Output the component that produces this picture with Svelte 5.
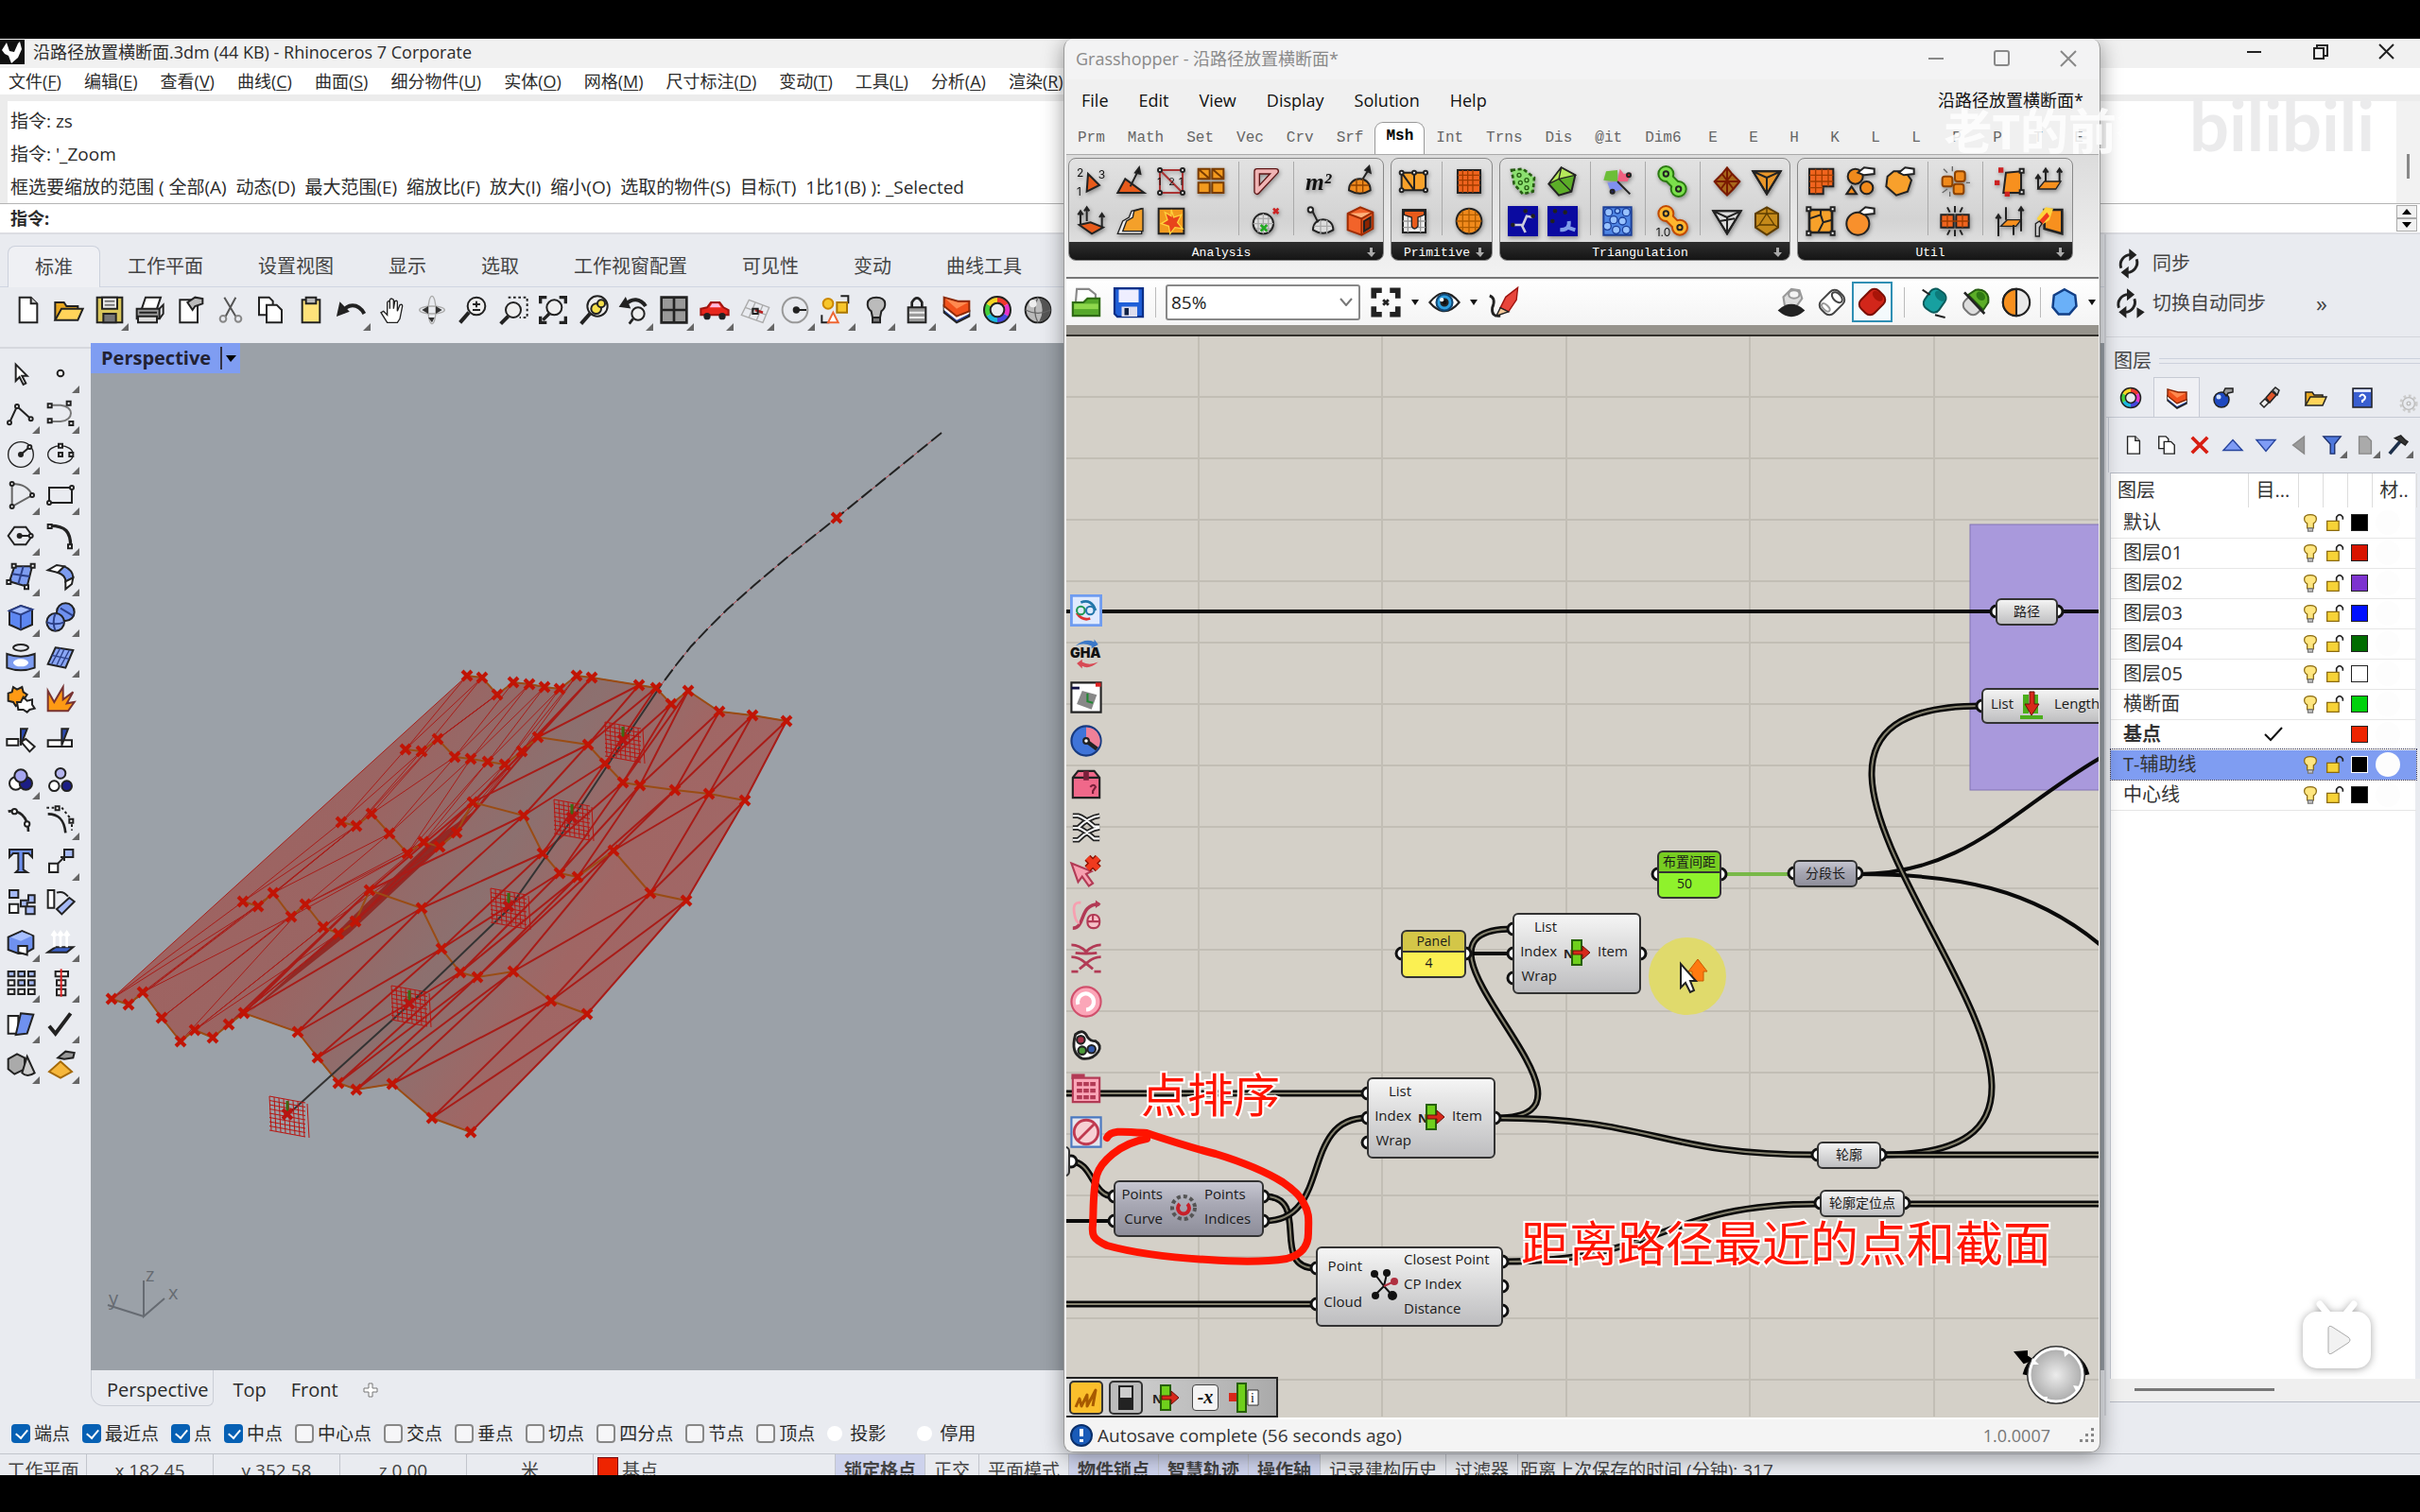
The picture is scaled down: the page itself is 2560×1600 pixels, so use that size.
<script lang="ts">
  type Point = [number, number];

  const menus = [
    ['文件', 'F'], ['编辑', 'E'], ['查看', 'V'], ['曲线', 'C'], ['曲面', 'S'], ['细分物件', 'U'], ['实体', 'O'],
    ['网格', 'M'], ['尺寸标注', 'D'], ['变动', 'T'], ['工具', 'L'], ['分析', 'A'], ['渲染', 'R']
  ];
  const rhinoTabs = ['标准', '工作平面', '设置视图', '显示', '选取', '工作视窗配置', '可见性', '变动', '曲线工具'];

  // All icons use a 24 x 24 box
  const icons: Record<string, string> = {
    doc: '<path fill="#fff" d="M5 2h9l5 5v15H5z"/><path fill="#ccc" d="M14 2v5h5"/>',
    open: '<path fill="#e9a820" d="M1 20V6h7l2 3h9v3"/><path fill="#ffd45a" d="M1 20 6 11h17l-4 9z"/>',
    save: '<path fill="#d8c55a" d="M2 2h20v20H2z"/><path fill="#eee" d="M6 2h12v9H6z"/><path fill="#777" d="M7 15h10v7H7z"/><path stroke="#777" d="M8 5h8M8 8h8"/>',
    print: '<path fill="#fff" d="M6 11 9 2h12l-3 9"/><path fill="#999" d="M2 11h18v8H2z"/><path fill="#ddd" d="M3 17h15v5H3z"/><path d="m20 11 3-3v7l-3 4M4 14h14"/>',
    props: '<path fill="#fff" d="M4 4h14v18H4z"/><path fill="#bbb" d="m10 6 6-4 6 1v4l-6 2-2 3z"/>',
    cut: '<path stroke="#555" d="M7 2l9 15M16 2 8 17"/><circle cx="6" cy="19" r="2.500" stroke="#888"/><circle cx="18" cy="19" r="2.500" stroke="#888"/>',
    copy: '<path fill="#fff" d="M3 2h8l3 3v11H3z"/><path fill="#fff" d="M9 8h8l4 4v10H9z"/>',
    paste: '<path fill="#ffe27a" d="M5 4h14v18H5z"/><path fill="#bbb" d="M8 2h8v5H8z"/>',
    undo: '<path stroke-width="3" d="M5 14c3-7 12-8 17 1"/><path fill="#222" d="m1 16 2-9 6 6z"/>',
    hand: '<path fill="#fff" stroke-width="1" d="M8 22 3 14l2-1 3 3V6q1-2 2 0v5-7q1-2 3 0v7l1-6q2-1 2 1v7l2-5q2-1 2 1l-2 10-2 3z"/>',
    orbit: '<ellipse cx="12" cy="12" rx="10" ry="3" stroke="#aaa" stroke-width="1"/><ellipse cx="12" cy="12" rx="3" ry="11" stroke="#aaa" stroke-width="1"/><path fill="#333" stroke="none" d="m4 12 5-3v6zm16 0-5-3v6zM12 22l-3-4h5z"/>',
    zoom: '<circle cx="15" cy="9" r="7" fill="#eee"/><path stroke-width="3" d="m9 14-7 8"/><path d="M15 5v5M12 7.500h6M12 12h6"/>',
    zoomwin: '<path stroke-dasharray="2 2" d="M8 2h15v16h-6"/><circle cx="12" cy="12" r="6" fill="#eee"/><path stroke-width="3" d="m8 17-6 6"/>',
    zoomext: '<path stroke-width="2.500" d="M2 7V2h5M17 2h5v5M22 17v5h-5M7 22H2v-5"/><circle cx="13" cy="10" r="6" fill="#eee"/><path stroke-width="2.500" d="m9 15-5 5"/>',
    zoomsel: '<circle cx="15" cy="9" r="8" fill="#eee"/><circle cx="14" cy="11" r="4" fill="#f6e04c"/><circle cx="18" cy="7" r="3" fill="#f6e04c"/><path stroke-width="3" d="m9 15-7 8"/>',
    zoomprev: '<path stroke-width="3" d="M5 8c5-6 12-5 16 1"/><path fill="#222" d="m1 9 4-6 3 7z"/><circle cx="15" cy="15" r="5" fill="#eee"/><path stroke-width="2" d="m11 19-3 4"/>',
    views: '<path fill="#999" stroke-width="2" d="M2 2h20v20H2zM12 2v20M2 12h20"/>',
    car: '<path fill="#e8261c" stroke="#a01510" d="M1 11l5-1 3-4h7l3 4 4 2v4H1z"/><path fill="#fbd" stroke="none" d="m8 10 2-3h5l2 3z"/><circle cx="6" cy="17" r="2" fill="#222"/><circle cx="18" cy="17" r="2" fill="#222"/>',
    cplane: '<path stroke="#aaa" stroke-width="1" d="m7 4 16 6-5 12L1 16zM4 10l17 6M12 6 7 18M18 8l-5 12"/><path stroke="#b22" stroke-width="2" d="m12 12 6 2"/><path d="M10 11h4v4h-4z"/>',
    turn: '<circle cx="12" cy="12" r="10" stroke="#999"/><path d="M12 12h9"/><circle cx="13" cy="12" r="2" fill="#222"/>',
    group: '<path d="M16 1h6v6M1 16v6h6"/><circle cx="6" cy="7" r="4" fill="#f7c62b" stroke="#c80"/><path fill="#f7c62b" stroke="#a70" d="M13 6h8v8h-8z"/><path fill="#fff" stroke="#e63" d="m10 14 4 8H6z"/>',
    bulb: '<path fill="#bbb" d="M12 2c9 0 8 8 4 11l-1 5H9l-1-5C4 10 3 2 12 2z"/><path fill="#777" d="M9 18h6v4H9z"/>',
    lock: '<path stroke-width="2" d="M8 10V6q4-7 8 0v4"/><path fill="#999" d="M5 10h14v12H5z"/><path stroke="#eee" d="M6 14h12M6 18h12"/>',
    layer: '<path fill="#26439c" d="m2 9 10 8 10-4v4l-10 5-10-8z"/><path fill="#fff" stroke="none" d="m2 9 10 8 10-4v2l-10 5-10-8z"/><path fill="#f1521c" stroke="#8c2a08" d="m2 2 11 3 9 0v8l-10 4L2 9z"/><path fill="#ff8a50" stroke="none" d="m3 3 10 3h8l-9 5z"/>',
    wheel: '<g stroke-width="5"><path stroke="#f03a2e" d="M12 4a8 8 0 0 1 7 4"/><path stroke="#e832c8" d="M19 8a8 8 0 0 1 0 8"/><path stroke="#4647e0" d="M19 16a8 8 0 0 1-7 4"/><path stroke="#1bb8e0" d="M12 20a8 8 0 0 1-7-4"/><path stroke="#43cf3c" d="M5 16a8 8 0 0 1 0-8"/><path stroke="#f5d422" d="M5 8a8 8 0 0 1 7-4"/></g><circle cx="12" cy="12" r="10.500"/><circle cx="12" cy="12" r="5.500"/>',
    sphere: '<circle cx="12" cy="12" r="10" fill="#bbb"/><path fill="#555" stroke="none" d="M13 3a9 9 0 0 1 0 18q5-9 0-18z"/><path stroke="#666" stroke-width="1" d="M2 12q10 5 20 0M12 2q-5 10 0 20"/><circle cx="8" cy="7" r="3" fill="#eee" stroke="none"/>',

    arrow: '<path fill="#fff" d="M8 5v13l3-3 3 6 2-1-3-6h4z"/>',
    point: '<circle cx="12" cy="12" r="2.500" fill="#fff"/>',
    pline: '<path d="M3 19 9 6l11 10"/><g fill="#fff"><circle cx="3" cy="19" r="1.500"/><circle cx="9" cy="6" r="1.500"/><circle cx="20" cy="16" r="1.500"/></g>',
    curve: '<path stroke="#777" d="M4 5h8c11 1 11 12 0 13H4"/><path fill="#fff" d="M2 4h3v3H2zM17 2h3v3h-3zM2 16h3v3H2zM19 18h3v3h-3z"/>',
    circle: '<circle cx="12" cy="12" r="10" stroke-width="1"/><path d="m12 12 7-6"/><circle cx="12" cy="12" r="1.500" fill="#222"/><circle cx="19" cy="6" r="1.500" fill="#fff"/>',
    ellipse: '<ellipse cx="12" cy="12" rx="10" ry="7" stroke-width="1"/><path fill="#fff" d="M10.500 3.500h3v3h-3zM10.500 10.500h3v3h-3zM19 10.500h3v3h-3z"/>',
    arc: '<path d="M5 21V3c9 0 14 4 16 9z" stroke="#666"/><g fill="#fff"><circle cx="5" cy="3" r="1.500"/><circle cx="5" cy="21" r="1.500"/><circle cx="21" cy="12" r="1.500"/></g>',
    rect: '<path d="M3 6h18v12H3z"/><circle cx="3" cy="18" r="1.500" fill="#fff"/><circle cx="21" cy="6" r="1.500" fill="#fff"/>',
    polygon: '<path d="M7 5h9l5 7-5 7H7l-5-7z"/><path d="M11 12h9"/><circle cx="11" cy="12" r="1.500" fill="#222"/><circle cx="20" cy="12" r="1.500" fill="#fff"/>',
    fillet: '<path stroke-width="2.500" d="M4 4c12 0 16 5 16 16"/><path fill="#fff" d="M2 3h3v3H2zM18 19h3v3h-3z"/>',
    srf: '<path fill="#7d9cf0" d="M7 4h14l-4 16-14-4z"/><path stroke="#2b3f86" d="m5 10 14 2M14 4l-4 14"/><path fill="#fff" d="M5 2h3v3H5zM20 2h3v3h-3zM1 15h3v3H1zM15 19h3v3h-3z"/>',
    bend: '<path fill="#fff" d="m2 7 7-4 6 1-5 5z"/><path fill="#7d9cf0" d="M15 4q7 3 7 9l-6 3q0-5-6-7z"/><path fill="#fff" d="m22 13-1 5-5 4v-6z"/>',
    box: '<path fill="#5d87f2" d="M3 7 12 3l9 3v12l-9 4-9-4z"/><path fill="#a8c0ff" stroke="#2b3f86" d="m3 7 9 3 9-4-9-3z"/><path stroke="#2b3f86" d="M12 10v12"/>',
    boole: '<circle cx="16" cy="8" r="7" fill="#6f91ef"/><circle cx="8" cy="16" r="7" fill="#86a4f5"/><path stroke="#2b3f86" d="M1 16q7 3 14 0M8 9q-3 7 0 14M12 5l10 6"/>',
    tube: '<ellipse cx="12" cy="4" rx="6" ry="2.500"/><path fill="#7d9cf0" d="M1 9q11 4 22 0v11q-11 4-22 0z"/><ellipse cx="12" cy="16" rx="6" ry="3" fill="#fff" stroke="none"/>',
    mesh: '<path fill="#8aa6f5" d="m8 4 14 2-6 14-14-3z"/><path stroke="#2b3f86" stroke-width="1" d="m5 10 14 3M15 5 9 18M12 4 5 17M19 6l-7 13"/>',
    gear: '<path fill="#ff9a14" d="M2 8l3-1 1-4 3 2 4-2 1 4 3 2-2 3 1 3-5 1-3 2-2-3-4-1z"/><path fill="#fff" d="m9 15 3 0 2-4 3 3 4-1 0 4 2 3-4 1-2 2-3-2-4 0z"/>',
    burst: '<path fill="#ff9a14" stroke="#733" d="M2 22V6l5 9 7-12v10l8-6-5 9 6-1-5 7z"/>',
    split: '<path fill="#fff" d="M1 12h9v5H1z"/><path fill="#fff" d="m12 14 4-2 7 6-4 4z"/><path fill="#2b4ab0" d="M12 4h5l-5 13z"/>',
    trim: '<path fill="#fff" d="M2 13h19v5H2z"/><path fill="#2b4ab0" d="M13 4h5l-5 13z"/>',
    union: '<circle cx="8" cy="15" r="5" fill="#fff"/><circle cx="16" cy="15" r="5" fill="#1c1e86"/><circle cx="12" cy="9" r="5" fill="#a5a5ef"/>',
    dots: '<circle cx="12" cy="7" r="4" fill="#b5b5ef"/><circle cx="7" cy="17" r="4" fill="#fff"/><circle cx="17" cy="17" r="4" fill="#1c1e86"/>',
    match: '<path stroke-width="2" d="M2 5c8-2 16 4 16 16"/><g fill="#fff"><circle cx="7" cy="5" r="2"/><circle cx="17" cy="15" r="2"/></g>',
    offset: '<path stroke-width="2" d="M2 7c9 0 13 5 14 15"/><path stroke-dasharray="2 2" d="M1 2h12l8 10v8"/><path fill="#fff" d="M8 1h3v3H8zM19 11h3v3h-3z"/>',
    text: '<path fill="#6f91ef" d="M3 3h18v6l-3-3h-4v13l3 2H8l2-2V6H6L3 9z"/>',
    move: '<path fill="#fff" d="M3 14h7v7H3z"/><path fill="#a5b9f5" d="M15 3h7v6h-7z"/><path d="m10 14 5-5M12 9h3v3"/>',
    blocks: '<path fill="#a5b9f5" d="M3 3h7v6H3zM12 11h6V7h5v6h-6v3h-5zM16 16h7v6h-7z"/><path fill="#fff" d="M3 14h7v7H3z"/>',
    rotate: '<path fill="#fff" d="M2 3h5v14H2z"/><path fill="#a5b9f5" d="m9 18 10-9 4 3-10 10z"/><path d="M9 5q5-2 9 3"/>',
    bool2: '<path fill="#6f91ef" d="m2 8 11-5 9 4v10l-7 4h-5l-8-3z"/><path fill="#a8c0ff" stroke="none" d="m4 8 9-4 8 3-9 4z"/><path fill="#fff" d="M10 15h7v7l-7-2z"/>',
    up: '<path fill="#3b5fc4" d="m2 20 6-4h14l-5 4z"/><path stroke="#fff" stroke-width="2" d="M7 16V4M12 16V4M17 16V4M5 7l2-3 2 3M10 7l2-3 2 3M15 7l2-3 2 3"/>',
    array: '<path fill="#a5b9f5" d="M2 3h5v4H2zM10 3h5v4h-5zM18 3h5v4h-5zM10 10h5v4h-5zM18 10h5v4h-5z"/><path fill="#fff" d="M2 10h5v4H2zM2 17h5v4H2zM10 17h5v4h-5zM18 17h5v4h-5z"/>',
    align: '<path fill="#fff" d="M8 3h10v4H8zM9 10h7v4H9zM9 17h7v5H9z"/><path stroke="#d22" d="M12.500 1v22"/>',
    boxes: '<path fill="#fff" d="M2 6h8v14H2z"/><path fill="#6f91ef" d="m12 4 10 1-5 15-9 1z"/>',
    check: '<path stroke-width="3" d="m3 14 5 6L20 4"/>',
    solids: '<path fill="#aaa" d="m2 8 7-4 6 3v9l-8 4-5-4z"/><path fill="#ccc" d="m17 6 6 13q-6 4-10 0z"/>',
    sand: '<path fill="#f6b73c" stroke="#a56a08" d="m12 10 9 8-9 5-9-5z"/><path fill="#999" d="m10 7 6-5 7 1-1 4-7 1z"/>',

    mIndex: '<path fill="#e85b1b" d="M9 6l9 9-10 5z"/><g fill="#111" stroke="none" font-size="9" font-family="Inter"><text x="0" y="8">2</text><text x="17" y="10">3</text><text x="0" y="23">1</text></g>',
    mNormal: '<path fill="#e85b1b" d="M7 10l15 11H1z"/><path d="m11 16 6-12"/><path fill="#111" d="m18 1 1 5-4-1z"/>',
    mFace: '<path stroke="#a33" d="M3 3h18v18H3zM3 3l18 18"/><g fill="#fff"><circle cx="3" cy="3" r="1.500"/><circle cx="21" cy="3" r="1.500"/><circle cx="3" cy="21" r="1.500"/><circle cx="21" cy="21" r="1.500"/></g><g fill="#111" stroke="none" font-size="8" font-family="Inter"><text x="1" y="15">1</text><text x="10" y="15">2</text><text x="18" y="15">1</text></g>',
    mQuad: '<path fill="#f29a1e" stroke="#7a3c00" d="M2 2h9v8H2zM13 2h9v8h-9zM2 13h9v8H2zM13 13h9v8h-9zM2 2l9 8M13 2l9 8"/>',
    mEdge: '<path stroke="#5c1414" stroke-width="5" stroke-linejoin="round" d="M5 4h15L5 20z"/><path stroke="#f0b4b4" stroke-width="3" stroke-linejoin="round" d="M5 4h15L5 20z"/>',
    mClose: '<circle cx="10" cy="14" r="8" fill="#ddd"/><path stroke="#aaa" stroke-width="1" d="M2 14h16M10 6v16M4 10h12M4 18h12M6 8v13M14 8v13"/><path stroke="#2a2" stroke-width="2" d="m8 15 5 5M13 15l-5 5"/><path stroke="#c22" stroke-width="2" d="m18 2 4 4M22 2l-4 4"/>',
    mArea: '<text x="0" y="19" fill="#111" stroke="none" font-size="19" font-weight="bold" font-style="italic" font-family="Liberation Serif">m²</text>',
    mDome: '<path fill="#f08a1c" d="M3 19c0-12 17-12 17 0q-8 5-17 0z"/><path stroke="#8c4200" stroke-width="1" d="M4 15h15M9 10v11M14 10v11"/><path d="m14 10 5-8"/><path fill="#111" d="m19 0 1 5-4-2z"/>',
    mVerts: '<path fill="#e85b1b" d="m2 15 9-2 10 4-9 5z"/><path d="M3 15V5M8 12V2M20 17V7M1 7l2-3 2 3M6 4l2-3 2 3M18 9l2-3 2 3"/>',
    mShadow: '<path fill="#eee" stroke-width="1" d="M1 22 5 12l5-3 2-5 8-2v20z"/><path fill="#f4a02a" stroke-width="1" d="M5 20 8 12l5-3 1-5 7-2v18z"/>',
    mStar: '<path fill="#f29a1e" d="M2 2h20v20H2z"/><path fill="#e8441b" stroke="#ffd23c" stroke-width="1" d="m12 3 2 6 6-2-3 6 4 5-6-1-4 5-1-6-6-2 5-3-2-6 5 3z"/>',
    mProbe: '<path fill="#ddd" d="M6 19c0-11 16-11 16 0q-8 5-16 0z"/><path stroke="#aaa" stroke-width="1" d="M7 16h14M12 11v11M17 11v11"/><path d="m5 3 5 10"/><circle cx="4" cy="3" r="2" fill="#fff"/>',
    mBox: '<path fill="#f2632a" stroke="#a02c00" d="M2 6 12 1l10 4v13l-9 5-11-4z"/><path fill="#ffb27c" stroke="#a02c00" d="M2 6l11 4 9-5M13 10v13"/><path fill="#8c2400" d="m15 12 5-3v8l-5 3z"/>',
    mSplit: '<path fill="#f7a12a" d="M2 5h19v14H2zM12 5v14M2 5l10 14"/><g fill="#fff"><circle cx="2" cy="5" r="1.500"/><circle cx="12" cy="5" r="1.500"/><circle cx="21" cy="5" r="1.500"/><circle cx="2" cy="19" r="1.500"/><circle cx="21" cy="19" r="1.500"/></g>',
    mPlane: '<path fill="#f0641e" d="M3 3h18v18H3z"/><path stroke="#a03c00" stroke-width="1" d="M3 7h18M3 11h18M3 15h18M7 3v18M11 3v18M15 3v18"/>',
    mDrip: '<path fill="#eee" d="M3 3h18v18H3z"/><path stroke="#999" stroke-width="1" d="M3 12h18M3 17h18M7 8v13M17 8v13"/><path fill="#e85b1b" stroke-width="1" d="M4 4h16v3l-5 2v7q-3 4-5 0V9L4 7z"/>',
    mSphere: '<circle cx="12" cy="12" r="10" fill="#f08a1c"/><path stroke="#b05c00" stroke-width="1" d="M2 12h20M12 2v20M4 7h16M4 17h16M7 4v16M17 4v16"/>',
    mPatch: '<path fill="#8ce070" d="m3 3 9-1 9 7-1 11-8 2-7-8z" stroke="#265c12" stroke-dasharray="3 2" stroke-width="2"/><g stroke="#265c12" stroke-width="1"><circle cx="9" cy="7" r="1.500"/><circle cx="15" cy="11" r="1.500"/><circle cx="10" cy="13" r="1.500"/><circle cx="15" cy="17" r="1.500"/></g>',
    mHull: '<path fill="#5cae28" d="M11 1 22 7l-3 13-10 3-8-9z"/><path fill="#b6e85a" stroke-width="1" d="m11 1-2 9-8 4zM11 1l11 6-13 3z"/><path stroke-width="1" d="m9 10 10 10"/>',
    mMetaball: '<path fill="#0a0aa0" stroke="none" d="M0 0h24v24H0z"/><path stroke="#ccd" stroke-width="2" d="M4 15h8l3-7 5 1M11 15l3 6"/><g fill="#000"><circle cx="14" cy="4" r="1"/><circle cx="20" cy="8" r="1"/><circle cx="4" cy="15" r="1"/></g>',
    mMeta2: '<path fill="#0a0aa0" stroke="none" d="M0 0h24v24H0z"/><path stroke="#7f9ce8" stroke-width="3" d="M10 19q8 0 7-7M16 17l6 2"/><g fill="#000"><circle cx="6" cy="4" r="1"/><circle cx="14" cy="5" r="1"/><circle cx="4" cy="12" r="1"/></g>',
    mVector: '<path fill="#6cbe38" stroke="none" d="M3 4l9-1v9L1 11z"/><path fill="#f06080" stroke="none" d="m12 12 2-10 3 4 6-1-3 7z"/><path fill="#8090f0" stroke="none" d="m12 12-8 1 3 8 9-3z"/><path d="m12 12 10 10"/><circle cx="21" cy="7" r="1.500" fill="#c22"/><circle cx="8" cy="20" r="1.500" fill="#226"/>',
    mVoronoi: '<path fill="#4f86e4" stroke="#1b3f9a" d="M1 1h22v22H1z"/><g stroke="#1b3f9a" stroke-width="1" fill="#98c2ff"><circle cx="5" cy="5" r="3"/><circle cx="12" cy="4" r="2"/><circle cx="19" cy="5" r="3"/><circle cx="9" cy="11" r="3"/><circle cx="16" cy="12" r="3"/><circle cx="4" cy="16" r="3"/><circle cx="11" cy="19" r="3"/><circle cx="19" cy="19" r="3"/></g>',
    mLinkG: '<g fill="#7be04c" stroke="#2a7a10"><path stroke-width="8" d="m8 8 9 9"/><circle cx="7" cy="6" r="6"/><circle cx="17" cy="18" r="6"/><path stroke="#7be04c" stroke-width="5" d="m8 8 9 9"/></g><circle cx="7" cy="6" r="2"/><circle cx="17" cy="18" r="2"/>',
    mLinkO: '<g fill="#ffb52e" stroke="#c24a00"><path stroke-width="8" d="m8 8 9 9"/><circle cx="7" cy="6" r="6"/><circle cx="18" cy="17" r="6"/><path stroke="#ffb52e" stroke-width="5" d="m8 8 9 9"/></g><circle cx="7" cy="6" r="2"/><circle cx="18" cy="17" r="2"/><text x="-1" y="24" fill="#111" stroke="none" font-size="9" font-family="Inter">1.0</text>',
    mOcta: '<path fill="#a8661a" stroke="#7a1a00" d="m12 1 4 5 6 6-5 6-5 5-5-5-5-6 6-6z"/><path stroke="#7a1a00" d="m8 6 9 12M16 6 7 18M2 12h20M12 1v22"/>',
    mTetra: '<path fill="#e8962a" d="M1 4h22L12 22z"/><path d="M1 4h22L12 22zM12 22V9L1 4M12 9l11-5"/>',
    mTetraW: '<path fill="#ddd" d="M1 4h22L12 22z"/><path d="M1 4h22L12 22zM12 22V9L1 4M12 9l11-5M6 12l12-2"/>',
    mIco: '<path fill="#c58a1a" stroke="#5c3c00" d="m12 1 9 5v11l-9 6-9-6V6z"/><path stroke="#5c3c00" stroke-width="1" d="m12 6 6 9H6zM12 1v5M3 17l3-2M21 17l-3-2M3 6l9 0 9 0"/>',
    mJoin: '<path fill="#f0641e" d="M3 2h19v14h-8v6H3z"/><path stroke="#a03c00" stroke-width="1" d="M3 7h19M3 12h19M3 17h11M8 2v20M13 2v14M18 2v14"/>',
    mPick: '<circle cx="8" cy="8" r="6" fill="#f08a1c"/><path fill="#f08a1c" d="m5 16 4 6H1z"/><circle cx="17" cy="17" r="5" fill="#f08a1c"/><path fill="#fff" d="m10 5 5-4 8 1v4l-8 1z"/>',
    mSmooth: '<path fill="#f8a02c" d="m7 4 9 0 5 7-3 9-9 3-8-7 1-8z"/><path fill="#fff" d="m11 5 5-4 7 1v4l-8 1z"/>',
    mWeld: '<path fill="#f7a12a" stroke-width="2" d="M3 3h18v18H3z"/><path d="m3 10 9-3 2 6 7-2M14 13l-4 8M12 7V3"/><path fill="#fff" d="M1 1h3v3H1zM20 1h3v3h-3zM1 20h3v3H1zM20 20h3v3h-3z"/>',
    mBall: '<circle cx="10" cy="14" r="9" fill="#f8902c"/><path fill="#fff" d="m11 5 5-4 7 1v4l-8 1z"/>',
    mExplode: '<g fill="#f08a1c" stroke="#8c4200"><rect x="2" y="8" width="8" height="8" rx="2"/><rect x="12" y="4" width="8" height="8" rx="2"/><rect x="11" y="14" width="8" height="8" rx="2"/></g><path stroke="#666" stroke-width="1" d="M10 0v4M3 2l3 3M21 13h3M2 21l4-3M8 20v4"/>',
    mCull: '<path fill="#f0641e" d="M1 7h10v10H1zM13 7h10v10H13z"/><path stroke="#a03c00" stroke-width="1" d="M1 12h22M6 7v10M18 7v10"/><path d="M12 0v5M6 1l2 4M18 1l-2 4M12 19v5M6 23l2-4M18 23l-2-4"/>',
    mDeform: '<path fill="#f7901e" d="m9 5 12-1v17H7z"/><path fill="#c22" stroke="none" d="M3 1h4v4H3zM0 11h4v4H0zM8 20h4v4H8z"/><path fill="#fff" d="M20 2h3v3h-3zM20 19h3v3h-3z"/>',
    mLift: '<path fill="#f7901e" stroke-width="1" d="m3 18 5-6h13l-4 6z"/><path d="M3 18V8M9 12V2M20 12V2M1 10l2-3 2 3M7 5l2-3 2 3M18 5l2-3 2 3"/>',
    mFlip: '<path fill="#f7901e" stroke-width="1" d="m5 16 5-5h11l-4 5z"/><path d="M3 24V8M9 11V1M21 20V1M15 23v-8M1 10l2-3 2 3M19 4l2-3 2 3"/>',
    mFlame: '<path fill="#f7901e" stroke-width="2" d="M8 3h14v19l-14-4z"/><path fill="#ffd23c" stroke="none" d="M2 10 9 1l6 1-3 9-6 4z"/><path fill="#f03a1e" stroke="none" d="m2 14 8-9 2 3-6 7z"/><path fill="#ccc" stroke-width="1" d="M1 24V14l3-2 2 2-2 3v7z"/>',

    ghOpen: '<path fill="#fff" stroke="#888" d="M5 2h9l5 4v8H4z"/><path fill="#56a82a" stroke="#2f6a14" d="M2 22V12h8l3-3h9v13z"/><path fill="#8fd84c" stroke="none" d="M3 13h18v4H3z"/>',
    ghSave: '<path fill="#1f5fd8" stroke="#0a2f86" d="M2 2h20v20H4l-2-2z"/><path fill="#eef" stroke="none" d="M5 3h14v9H5z"/><path fill="#dde" stroke="none" d="M7 15h11v7H7z"/><path fill="#124" stroke="none" d="M9 16h3v5H9z"/>',
    ghFit: '<path stroke-width="4" d="M3 9V3h6M15 3h6v6M21 15v6h-6M9 21H3v-6"/><path stroke-width="2" d="m10 10 4 4M14 10l-4 4"/>',
    ghEye: '<path fill="#fff" d="M1 12q11-14 22 0-11 13-22 0z"/><circle cx="12" cy="12" r="6" fill="#2e9fe0" stroke="#124a78"/><circle cx="12" cy="12" r="2.500" fill="#111"/><circle cx="10" cy="10" r="1.500" fill="#fff" stroke="none"/>',
    ghPen: '<path fill="#e8463c" stroke="#a01510" stroke-width="1" d="m10 16 4-8 9-7-1 9-6 9z"/><path fill="#f3c89a" stroke-width="1" d="m10 16-3 6 9-3z"/><path stroke-width="2" d="M2 7q5 2 2 9-1 7 6 6"/>',
    vHide: '<path fill="#ddd" stroke="#999" d="m6 8 6-6 6 1 2 6-5 7-8-2z"/><ellipse cx="14" cy="6" rx="4" ry="3" stroke="#999" fill="#f4f4f4"/><path fill="#222" d="M3 18q9-8 18 0-9 8-18 0z"/>',
    vWire: '<rect x="2" y="5" width="20" height="14" rx="5" fill="#fff" stroke="#444" transform="rotate(-45 12 12)"/><ellipse cx="16" cy="8" rx="3" ry="5" stroke="#444" transform="rotate(-45 16 8)"/><ellipse cx="7" cy="16" rx="2" ry="4" stroke="#999" transform="rotate(-45 7 16)"/>',
    vShade: '<rect x="2" y="4" width="20" height="15" rx="5" fill="#d2261a" stroke="#7a0e04" transform="rotate(-45 12 12)"/><ellipse cx="16" cy="7" rx="3" ry="5" fill="#a81408" stroke="none" transform="rotate(-45 16 7)"/>',
    vSel: '<rect x="4" y="4" width="18" height="14" rx="5" fill="#17a0a0" stroke="#0b5a5a" transform="rotate(-55 12 12)"/><ellipse cx="16" cy="7" rx="3" ry="5" fill="#0c7a7a" stroke="none" transform="rotate(-45 16 7)"/><path d="m2 2 6 4M12 22l8 2"/>',
    vClip: '<rect x="2" y="5" width="20" height="14" rx="5" fill="#ddd" stroke="#777" transform="rotate(-45 12 12)"/><path fill="#5cae28" stroke="#265c12" d="m6 6 6-4q8-1 10 6v4l-4 6z"/><ellipse cx="16" cy="7" rx="3" ry="4" fill="#2f7a14" stroke="none" transform="rotate(-45 16 7)"/><path stroke-width="2" d="m3 4 16 17"/>',
    vHalf: '<circle cx="12" cy="12" r="10" fill="#e8e8e8"/><path fill="#f7901e" d="M12 2a10 10 0 0 0 0 20z"/>',
    vHex: '<path fill="#6ab0f8" stroke="#123f86" stroke-width="2" d="m12 1 9 5 1 9-6 7-9 0-5-6 1-10z"/>',

    sync: '<path stroke-width="2.500" d="M5 16A9 9 0 0 1 14 4M19 8a9 9 0 0 1-9 12"/><path fill="#222" d="m13 0 5 4-5 4zM11 16l-5 4 5 4z"/>',
    syncAuto: '<path stroke-width="2.500" d="M3 16A9 9 0 0 1 12 4M17 8a9 9 0 0 1-9 12"/><path fill="#222" d="m11 0 5 4-5 4zM9 16l-5 4 5 4zM20 17v7l5-4z"/>',
    bomb: '<circle cx="10" cy="14" r="8" fill="#1f49c0"/><circle cx="7" cy="11" r="2.500" fill="#cfe0ff" stroke="none"/><path fill="#999" d="m12 6 2-4h8v4l-5 1-2 3z"/>',
    tube2: '<path fill="#eee" d="m2 18 5-5 4 4-5 5z"/><path fill="#e0562a" d="m8 12 6-7 5 4-7 8z"/><path fill="#ccc" d="m15 4 3-3 4 3-2 5z"/>',
    help: '<path fill="#3a5fd0" d="M2 2h20v20H2z"/><path fill="#dfe6ff" stroke="none" d="M3 3h18v3H3z"/><path stroke="#fff" stroke-width="2" d="M9 11q3-5 6 0 0 3-3 4v2"/>',
    cog: '<circle cx="12" cy="12" r="9" stroke="#ccc" stroke-width="3" stroke-dasharray="3 3"/><circle cx="12" cy="12" r="7" stroke="#bbb"/><circle cx="12" cy="12" r="2" stroke="#bbb"/>',
    del: '<path stroke="#d81e12" stroke-width="4" d="m3 3 18 18M21 3 3 21"/>',
    tri: '<path fill="#7f9cf5" stroke="#26439c" d="M12 6 23 18H1z"/>',
    triDown: '<path fill="#7f9cf5" stroke="#26439c" d="M1 6h22L12 19z"/>',
    triLeft: '<path fill="#999" stroke="#888" d="M18 2v20L5 12z"/>',
    filter: '<path fill="#4f78dc" stroke="#1c2f6a" d="M2 2h20l-7 9v11h-5V11z"/>',
    docGrey: '<path fill="#aaa" stroke="#888" d="M5 2h9l5 5v15H5z"/>',
    hammer: '<path stroke="#1c2f4a" stroke-width="4" d="M2 22 14 8"/><path fill="#333" d="m8 4 7-3 5 5 3 2-3 4-7-5z"/>',
    lamp: '<path fill="#ffe680" stroke="#8a6a10" d="M12 2c11 0 8 9 4 11v6H8v-6C4 11 1 2 12 2z"/><path fill="#ccc" stroke="#777" d="M9 19h6v4H9z"/>',
    unlock: '<path stroke-width="2" d="M14 10V5q4-6 8 0v3"/><path fill="#f7d337" stroke="#8a6a10" d="M2 10h15v12H2z"/>'
  };

  const standardTools = ['doc', 'open', 'save', 'print', 'props', 'cut', 'copy', 'paste', 'undo', 'hand', 'orbit', 'zoom', 'zoomwin', 'zoomext', 'zoomsel', 'zoomprev', 'views', 'car', 'cplane', 'turn', 'group', 'bulb', 'lock', 'layer', 'wheel', 'sphere'];
  const standardFlyouts = ['save', 'undo', 'zoomprev', 'views', 'car', 'cplane', 'turn', 'group', 'bulb', 'lock', 'layer', 'wheel'];
  const sideTools = ['arrow', 'point', 'pline', 'curve', 'circle', 'ellipse', 'arc', 'rect', 'polygon', 'fillet', 'srf', 'bend', 'box', 'boole', 'tube', 'mesh', 'gear', 'burst', 'split', 'trim', 'union', 'dots', 'match', 'offset', 'text', 'move', 'blocks', 'rotate', 'bool2', 'up', 'array', 'align', 'boxes', 'check', 'solids', 'sand'];
  const sidePlain = ['arrow', 'gear', 'burst', 'split', 'trim', 'dots', 'match', 'text', 'blocks', 'rotate'];

  const snaps = [
    { label: '端点', on: true }, { label: '最近点', on: true }, { label: '点', on: true }, { label: '中点', on: true },
    { label: '中心点', on: false }, { label: '交点', on: false }, { label: '垂点', on: false }, { label: '切点', on: false },
    { label: '四分点', on: false }, { label: '节点', on: false }, { label: '顶点', on: false }
  ];

  const status = [
    { text: '锁定格点', on: true }, { text: '正交', on: false }, { text: '平面模式', on: false }, { text: '物件锁点', on: true },
    { text: '智慧轨迹', on: true }, { text: '操作轴', on: true }, { text: '记录建构历史', on: false }, { text: '过滤器', on: false }
  ];

  const layers = [
    { name: '默认', color: '#000000' },
    { name: '图层01', color: '#d81400' },
    { name: '图层02', color: '#7d33cf' },
    { name: '图层03', color: '#0010ff' },
    { name: '图层04', color: '#006c00' },
    { name: '图层05', color: '#ffffff' },
    { name: '横断面', color: '#00d20c' },
    { name: '基点', color: '#ee2400', current: true },
    { name: 'T-辅助线', color: '#000000', selected: true },
    { name: '中心线', color: '#000000' }
  ];

  const panelTabs = ['wheel', 'layer', 'bomb', 'tube2', 'open', 'help'];
  const layerTools = ['doc', 'copy', 'del', 'tri', 'triDown', 'triLeft', 'filter', 'docGrey', 'hammer'];
  const layerFlyouts = ['filter', 'docGrey', 'hammer'];

  // Grasshopper
  const ghMenus = ['File', 'Edit', 'View', 'Display', 'Solution', 'Help'];
  const ghTabs = ['Prm', 'Math', 'Set', 'Vec', 'Crv', 'Srf', 'Msh', 'Int', 'Trns', 'Dis', '@it', 'Dim6', 'E', 'E', 'H', 'K', 'L', 'L', 'P', 'P', 'T', 'E'];
  const ribbon = [
    { name: 'Analysis', blocks: [['mIndex', 'mNormal', 'mFace', 'mQuad', 'mVerts', 'mShadow', 'mStar'], ['mEdge', 'mClose'], ['mArea', 'mDome', 'mProbe', 'mBox']], cols: [4, 1, 2] },
    { name: 'Primitive', blocks: [['mSplit', 'mDrip'], ['mPlane', 'mSphere']], cols: [1, 1] },
    { name: 'Triangulation', blocks: [['mPatch', 'mHull', 'mMetaball', 'mMeta2'], ['mVector', 'mVoronoi'], ['mLinkG', 'mLinkO'], ['mOcta', 'mTetra', 'mTetraW', 'mIco']], cols: [2, 1, 1, 2] },
    { name: 'Util', blocks: [['mJoin', 'mPick', 'mSmooth', 'mWeld', 'mBall'], ['mExplode', 'mCull'], ['mDeform', 'mLift', 'mFlip', 'mFlame']], cols: [3, 1, 2] }
  ];

  const widgets = [
    '<path fill="#dfeaff" stroke="#6f9cf0" stroke-width="2" d="M1 1h22v22H1z"/><path stroke="#d33" stroke-width="2" d="M5 14q4 6 10 4"/><path stroke="#27a" stroke-width="2" d="M8 6q8-3 11 6"/><circle cx="8" cy="12" r="3" stroke="#295"/><circle cx="15" cy="12" r="3" stroke="#27a"/>',
    '<path fill="#3b78c8" stroke="none" d="M4 6q7-6 14-3V1l3 4-5 3V6Q10 3 4 6z"/><path fill="#d84a55" stroke="none" d="M21 18q-7 6-12 3v2l-4-4 4-3v2q5 3 12 0z"/><text x="0" y="15" fill="#111" stroke="none" font-size="10" font-weight="900" font-family="Inter">GHA</text>',
    '<path fill="#fff" d="M1 1h22v22H1z"/><path fill="#d22" stroke="none" d="M19 1h4v3h-4z"/><path fill="#114" stroke="none" d="M1 4h6v2H1z"/><path fill="#888" stroke="none" d="m9 7 11 3-4 11-11-4z"/><path stroke="#283" d="m13 9 0 6 4 1"/>',
    '<circle cx="12" cy="12" r="11" fill="#3f74d8" stroke="#173a80"/><path fill="#f08098" stroke="none" d="M12 12V2a10 10 0 0 1 9 15z"/><path stroke-width="3" d="m12 12 8 6"/><circle cx="12" cy="12" r="2" fill="#fff"/>',
    '<path fill="#f0688a" d="m2 7 4-5h12l4 5v15H2zM2 7h20"/><path fill="#7a1f3a" stroke="none" d="M10 2h4v7h-4z"/><path stroke="#7a1f3a" d="M15 14q3-3 4 0l-2 3v2"/>',
    '<g stroke-width="4"><path d="M2 3h4q4 1 12 8h4M2 12h4q4 1 12 8h4M2 12h4q8-8 16-9M2 21h4q8-8 16-9"/></g><g stroke="#fff"><path d="M2 3h4q4 1 12 8h4M2 12h4q4 1 12 8h4M2 12h4q8-8 16-9M2 21h4q8-8 16-9"/></g>',
    '<path fill="#f7a0b0" stroke="#b23a55" d="M1 6 16 12l-4 2 5 7-3 2-5-7-3 4z"/><path stroke="#8c1200" stroke-width="6" d="m13 2 8 8M21 2l-8 8"/><path stroke="#f03a1e" stroke-width="4" d="m13 2 8 8M21 2l-8 8"/>',
    '<path stroke="#b23a55" stroke-width="2.500" d="M2 22c10 0 4-18 20-18"/><path fill="#b23a55" stroke="none" d="m19 1 4 3-4 3z"/><path stroke="#f7a0b0" stroke-width="2" d="M8 3Q2 2 3 10t4 8"/><rect x="13" y="12" width="9" height="10" rx="4" fill="#f7c0c8" stroke="#b23a55"/><path stroke="#b23a55" d="M13 17h9M17 12v5"/>',
    '<path stroke="#b23a55" stroke-width="2" d="M1 2q6 0 11 5Q17 2 23 2M4 8q8 1 16 0M1 11q6 0 11 5 5-5 11-5M7 20l5-4 5 4M1 22h5M18 22h5"/>',
    '<circle cx="12" cy="12" r="11" fill="#fba6b8" stroke="#d0506c"/><path stroke="#fff" stroke-width="3" d="M6 14a6 6 0 1 1 6 4"/>',
    '<path fill="#fff" stroke-width="2" d="M4 4q6-5 9 2 2 3 6 3 5 3 2 8-4 6-12 5-9-4-5-18z"/><circle cx="8" cy="8" r="3" fill="#a83048"/><circle cx="9" cy="16" r="3" fill="#4a9a38"/><circle cx="16" cy="15" r="3" fill="#3258a8"/>',
    '<path fill="#b23a55" stroke="none" d="M1 1h10v4H1z"/><path fill="#fba6b8" stroke="#b23a55" d="M2 4h20v18H2z"/><path fill="#b23a55" stroke="none" d="M5 7h4v3H5zM10 7h4v3h-4zM15 7h4v3h-4zM5 12h4v3H5zM10 12h4v3h-4zM15 12h4v3h-4zM5 17h4v3H5zM10 17h4v3h-4zM15 17h4v3h-4z"/>',
    '<path fill="#e6e6ee" stroke="#4a78c0" d="M1 1h22v22H1z"/><circle cx="12" cy="12" r="9" stroke="#c03a50" stroke-width="2" fill="#f7d0d4"/><path stroke="#c03a50" stroke-width="2" d="m6 18 12-12"/>'
  ];

  // Wires of the definition; double ones carry lists
  const wires = [
    { d: 'M1128 647H2112M2176 647H2222', list: false },
    { d: 'M1128 1292H1178', list: false },
    { d: 'M1552 1009H1600', list: false },
    { d: 'M1966 925C2080 925 2130 855 2222 802', list: false },
    { d: 'M1966 925C2070 925 2150 940 2222 1000', list: false },
    { d: 'M1128 1157H1446', list: true },
    { d: 'M1128 1380H1392', list: true },
    { d: 'M1133 1229C1156 1229 1155 1266 1178 1266', list: true },
    { d: 'M1338 1266C1388 1266 1342 1342 1392 1342', list: true },
    { d: 'M1338 1292C1410 1292 1374 1183 1446 1183', list: true },
    { d: 'M1583 1183C1728 1183 1455 983 1600 983', list: true },
    { d: 'M1583 1183C1750 1183 1754 1222 1921 1222', list: true },
    { d: 'M1991 1222C2345 1222 1742 747 2096 747', list: true },
    { d: 'M1991 1222H2222', list: true },
    { d: 'M2016 1274H2222', list: true },
    { d: 'M1591 1335C1758 1335 1757 1274 1924 1274', list: true }
  ];

  const components = [
    { x: 1601, y: 967, w: 134, h: 84, left: 46, right: 89, ins: [['List', 983], ['Index', 1009], ['Wrap', 1035]], outs: [['Item', 1009]] },
    { x: 1447, y: 1141, w: 134, h: 84, left: 46, right: 89, ins: [['List', 1157], ['Index', 1183], ['Wrap', 1209]], outs: [['Item', 1183]] },
    { x: 1393, y: 1320, w: 196, h: 83, left: 48, right: 92, ins: [['Point', 1342], ['Cloud', 1380]], outs: [['Closest Point', 1335], ['CP Index', 1361], ['Distance', 1387]] },
    { x: 1179, y: 1250, w: 157, h: 58, left: 51, right: 95, ins: [['Points', 1266], ['Curve', 1292]], outs: [['Points', 1266], ['Indices', 1292]], hidden: true },
    { x: 2097, y: 729, w: 150, h: 36, left: 33, right: 76, ins: [['List', 747]], outs: [['Length', 747]] }
  ];

  const relays = [
    { x: 2112, y: 634, w: 64, label: '路径' },
    { x: 1898, y: 911, w: 66, label: '分段长', hidden: true },
    { x: 1923, y: 1209, w: 66, label: '轮廓' },
    { x: 1926, y: 1260, w: 88, label: '轮廓定位点' }
  ];

  const panels = [
    { x: 1483, y: 985, w: 67, title: 'Panel', value: '4', head: '#d3c648', body: '#fbf052' },
    { x: 1754, y: 901, w: 66, title: '布置间距', value: '50', head: '#77cd22', body: '#8ff22c' }
  ];

  const gridX = [1268, 1462, 1657, 1851, 2046];
  const gridY = Array.from({ length: 17 }, (_, i) => 420 + i * 65);

  // Sampled cross sections of the terrain, back to front
  const sections: Point[][] = [
    [[687, 552], [714, 557], [743, 592], [772, 566], [801, 570], [829, 576], [858, 580], [889, 552], [917, 557], [1003, 573], [1034, 578], [1063, 613], [1094, 585], [1152, 629], [1213, 638], [1275, 649]],
    [[574, 709], [602, 714], [632, 687], [664, 725], [694, 730], [725, 736], [756, 741], [787, 714], [817, 684], [909, 700], [940, 740], [973, 779], [1005, 785], [1069, 795], [1133, 805], [1199, 818]],
    [[454, 865], [483, 873], [511, 846], [543, 889], [576, 931], [606, 907], [636, 916], [667, 887], [697, 822], [791, 850], [825, 930], [858, 973], [891, 980], [957, 925], [1024, 1016], [1091, 1031]],
    [[273, 1034], [301, 1044], [329, 1016], [363, 1066], [388, 1040], [421, 1088], [450, 1102], [481, 1076], [507, 1009], [603, 1047], [640, 1133], [674, 1183], [706, 1194], [772, 1182], [841, 1245], [908, 1272]],
    [[32, 1240], [62, 1253], [89, 1227], [123, 1281], [158, 1330], [185, 1307], [218, 1322], [247, 1295], [275, 1270], [374, 1311], [412, 1364], [449, 1419], [482, 1433], [549, 1421], [622, 1493], [694, 1523]]
  ];
  const frames: Point[] = [[974, 689], [880, 855], [763, 1044], [581, 1251], [356, 1485]];
  const track: Point[] = [[1561, 37], [1460, 130], [1367, 217], [1280, 298], [1215, 362], [1165, 413], [1130, 452], [1100, 490], [1072, 530], [1045, 570]];

  const toView = ([x, y]: Point): Point => [Math.round(4 + x * 0.574), Math.round(77 + y * 0.4975)];
  const path = (points: Point[]) => 'M' + points.map((p) => toView(p).join(' ')).join('L');

  const back = sections[0];
  const front = sections[4];
  const outline = path([...back, ...sections.slice(1, 4).map((s) => s[15]), ...[...front].reverse()]) + 'Z';

  // The left bank is seen at a flat angle, so its edges are drawn thinner
  let bankLines = '';
  let meshLines = '';
  for (let s = 0; s < 4; s++) {
    for (let i = 0; i < 16; i++) {
      let edges = path([sections[s][i], sections[s + 1][i]]);
      if (i > 0) edges += path([sections[s][i], sections[s + 1][i - 1]]);
      if (i < 8) bankLines += edges;
      else meshLines += edges;
    }
  }
  const marks = [...sections.flat(), [1367, 217] as Point].map(toView);
  const frameLines = Array.from({ length: 9 }, (_, i) => i);
</script>

{#snippet icon(name: string, size: number)}
  <svg class="icon" width={size} height={size} viewBox="0 0 24 24">{@html icons[name]}</svg>
{/snippet}

{#snippet wire(d: string, list: boolean)}
  <path class="wire" class:list {d} />
  {#if list}<path class="wire-core" {d} />{/if}
{/snippet}

{#snippet itemIcon(x: number, y: number)}
  <text class="letter" x={x - 14} y={y + 6}>N</text>
  <rect x={x - 5} y={y - 13} width="10" height="26" fill="#6fd01c" stroke="#276008" stroke-width="2" />
  <path d="M{x - 4} {y - 2}h10v-5l8 7-8 7v-5h-10z" fill="#d8281a" stroke="#6a1008" />
{/snippet}

<div class="screen">
  <div class="rhino">
    <header class="title">
      <svg width="26" height="26" viewBox="0 0 26 26"><path fill="#111" d="M0 0h26v26H0z" /><path fill="#fff" d="m2 11 5-8 3 9 5 1 4-9 2-2 2 8-4 9-7 6-3-8-4-2z" /></svg>
      <h1>沿路径放置横断面.3dm (44 KB) - Rhinoceros 7 Corporate</h1>
      <div class="controls">
        <button aria-label="最小化"><svg width="18" height="18"><path d="M1 9h15" /></svg></button>
        <button aria-label="还原"><svg width="18" height="18"><path d="M2 5h10v11H2zM5 5V2h11v11h-4" /></svg></button>
        <button aria-label="关闭"><svg width="18" height="18"><path d="m1 1 15 15M16 1 1 16" /></svg></button>
      </div>
    </header>

    <nav class="menu">
      {#each menus as [label, key]}
        <button>{label}(<u>{key}</u>)</button>
      {/each}
    </nav>

    <section class="command">
      <div class="history">
        <div class="lines">
          <p>指令: zs</p>
          <p>指令: '_Zoom</p>
          <p>框选要缩放的范围 ( 全部(A)&nbsp; 动态(D)&nbsp; 最大范围(E)&nbsp; 缩放比(F)&nbsp; 放大(I)&nbsp; 缩小(O)&nbsp; 选取的物件(S)&nbsp; 目标(T)&nbsp; 1比1(B) ): _Selected</p>
        </div>
        <div class="vscroll"><span></span></div>
      </div>
      <div class="prompt">
        <label for="prompt">指令:</label>
        <input id="prompt" type="text" />
        <div class="spin">
          <button aria-label="上一条"><svg width="12" height="8"><path d="M6 1l5 6H1z" /></svg></button>
          <button aria-label="下一条"><svg width="12" height="8"><path d="M6 7 1 1h10z" /></svg></button>
        </div>
      </div>
    </section>

    <div class="work">
      <main>
        <nav class="tabs">
          {#each rhinoTabs as tab, i}
            <button class:active={i === 0}>{tab}</button>
          {/each}
        </nav>
        <div class="toolbar">
          {#each standardTools as tool}
            <button class:flyout={standardFlyouts.includes(tool)} aria-label={tool}>{@render icon(tool, 32)}</button>
          {/each}
        </div>
        <div class="body">
          <aside class="side">
            {#each sideTools as tool}
              <button class:flyout={!sidePlain.includes(tool)} aria-label={tool}>{@render icon(tool, 32)}</button>
            {/each}
          </aside>
          <div class="views">
            <div class="viewport">
              <button class="view-name">Perspective <i></i><svg width="11" height="7"><path d="M0 0h11L5 7z" /></svg></button>
              <svg class="scene" width="100%" height="100%">
                <defs>
                  <linearGradient id="skin" x1="0" x2="1" y1="0.1" y2="0.5">
                    <stop offset="0" stop-color="#a4615f" />
                    <stop offset="0.42" stop-color="#9a6563" />
                    <stop offset="0.6" stop-color="#8c706f" />
                    <stop offset="0.76" stop-color="#a06664" />
                    <stop offset="1" stop-color="#a26767" />
                  </linearGradient>
                </defs>
                <path d={outline} fill="url(#skin)" stroke="#a8201a" stroke-width="1" />
                <path d={path([[620, 905], [700, 840], [660, 895], [470, 1100], [285, 1268], [440, 1105], [480, 1060]]) + 'Z'} fill="#8f1610" opacity="0.75" />
                <path d={bankLines} fill="none" stroke="#a81c18" stroke-width="1" />
                <path d={meshLines} fill="none" stroke="#a81c18" stroke-width="2" />
                {#each sections as section}
                  <path d={path(section)} fill="none" stroke="#9a4c14" stroke-width="2" />
                {/each}
                <path d={path(track)} fill="none" stroke="#b04048" stroke-width="1" />
                <path d={path(track)} fill="none" stroke="#222" stroke-width="2" stroke-dasharray="14 5" />
                <path d={path([[1045, 570], [974, 693], [880, 858], [763, 1049], [581, 1253], [356, 1488]])} fill="none" stroke="#333" stroke-width="2" />
                {#each frames.map(toView) as [x, y]}
                  <g transform="translate({x} {y})" stroke="#b81410" stroke-width="1" fill="none">
                    {#each frameLines as i}
                      <path d="M{-19 + i * 5} {-19 + i}l2 36M-19 {-19 + i * 4.5}l38 7" />
                    {/each}
                    <path d="M0 0v-14" stroke="#3c6a14" stroke-width="3" />
                    <path d="m-5-5 10 10M5-5-5 5" stroke-width="4" />
                  </g>
                {/each}
                {#each marks as [x, y]}
                  <path class="mark" d="M{x - 5} {y - 5}l10 10m0-10l-10 10" />
                {/each}
                <g class="axes">
                  <path d="M56 992v38l22-19M56 1030l-38-12" />
                  <text x="58" y="993">z</text><text x="82" y="1012">x</text><text x="19" y="1018">y</text>
                </g>
              </svg>
            </div>
            <nav class="view-tabs">
              <button class="active">Perspective</button>
              <button>Top</button>
              <button>Front</button>
              <button aria-label="新增"><svg width="16" height="16"><path d="M6 1h4v5h5v4h-5v5H6v-5H1V6h5z" fill="#fff" stroke="#777" /></svg></button>
            </nav>
          </div>
        </div>
      </main>

      <aside class="panel">
        <div class="sync">
          <button>{@render icon('sync', 28)}同步</button>
          <button>{@render icon('syncAuto', 28)}切换自动同步</button>
          <button class="more">»</button>
        </div>
        <h2><span>图层</span></h2>
        <nav class="panel-tabs">
          {#each panelTabs as tab, i}
            <button class:active={i === 1} aria-label={tab}>{@render icon(tab, 24)}</button>
          {/each}
          <button class="cog" aria-label="选项">{@render icon('cog', 22)}</button>
        </nav>
        <div class="layer-tools">
          {#each layerTools as tool}
            <button class:flyout={layerFlyouts.includes(tool)} aria-label={tool}>{@render icon(tool, 22)}</button>
          {/each}
        </div>
        <div class="layers">
          <table>
            <thead>
              <tr><th class="name">图层</th><th class="now">目...</th><th></th><th></th><th></th><th class="mat">材..</th></tr>
            </thead>
            <tbody>
              {#each layers as layer (layer.name)}
                <tr class:current={layer.current} class:selected={layer.selected}>
                  <td class="name">{layer.name}</td>
                  <td>{#if layer.current}<svg width="20" height="16"><path d="m1 8 6 6L19 1" fill="none" stroke="#111" stroke-width="2" /></svg>{/if}</td>
                  <td>{#if !layer.current}{@render icon('lamp', 20)}{/if}</td>
                  <td>{#if !layer.current}{@render icon('unlock', 20)}{/if}</td>
                  <td><span class="swatch" style="background: {layer.color}"></span></td>
                  <td><span class="material"></span></td>
                </tr>
              {/each}
            </tbody>
          </table>
        </div>
        <div class="hscroll"><span></span></div>
      </aside>
    </div>

    <div class="osnap">
      {#each snaps as snap}
        <label><input type="checkbox" checked={snap.on} />{snap.label}</label>
      {/each}
      <label class="round"><input type="checkbox" />投影</label>
      <label class="round"><input type="checkbox" />停用</label>
    </div>

    <footer class="status">
      <span class="plane">工作平面</span>
      <span class="coord">x 182.45</span>
      <span class="coord">y 352.58</span>
      <span class="coord">z 0.00</span>
      <span class="coord">米</span>
      <span class="active-layer"><i></i>基点</span>
      {#each status as item}
        <button class:on={item.on}>{item.text}</button>
      {/each}
      <span class="saved">距离上次保存的时间 (分钟): 317</span>
    </footer>

    <section class="gh">
      <header class="gh-title">
        <h2>Grasshopper - 沿路径放置横断面*</h2>
        <div class="controls">
          <button aria-label="Minimize"><svg width="18" height="18"><path d="M1 9h16" /></svg></button>
          <button aria-label="Maximize"><svg width="18" height="18"><rect x="1" y="1" width="15" height="15" rx="2" /></svg></button>
          <button aria-label="Close"><svg width="18" height="18"><path d="m1 1 16 16M17 1 1 17" /></svg></button>
        </div>
      </header>
      <nav class="gh-menu">
        {#each ghMenus as item}<button>{item}</button>{/each}
        <button class="file">沿路径放置横断面*</button>
      </nav>
      <nav class="gh-tabs">
        {#each ghTabs as tab}<button class:active={tab === 'Msh'}>{tab}</button>{/each}
      </nav>
      <div class="ribbon">
        {#each ribbon as group}
          <section>
            <div class="blocks">
              {#each group.blocks as block, b}
                <div class="block" style="grid-template-columns: repeat({group.cols[b]}, 42px)">
                  {#each block as tool}
                    <button aria-label={tool}>{@render icon(tool, 32)}</button>
                  {/each}
                </div>
              {/each}
            </div>
            <h3>{group.name}<svg width="11" height="12"><path d="M4 1h3v5h3l-4 5-5-5h3z" fill="#aaa" /></svg></h3>
          </section>
        {/each}
      </div>
      <div class="gh-bar">
        <button aria-label="Open">{@render icon('ghOpen', 34)}</button>
        <button aria-label="Save">{@render icon('ghSave', 36)}</button>
        <hr />
        <select aria-label="Zoom"><option>85%</option></select>
        <button aria-label="Zoom extents">{@render icon('ghFit', 34)}</button>
        <i class="caret"></i>
        <button aria-label="Named views">{@render icon('ghEye', 34)}</button>
        <i class="caret"></i>
        <button aria-label="Sketch">{@render icon('ghPen', 34)}</button>
        <span class="fill"></span>
        <button class="big" aria-label="No preview">{@render icon('vHide', 34)}</button>
        <button class="big" aria-label="Wireframe">{@render icon('vWire', 32)}</button>
        <button class="big on" aria-label="Shaded">{@render icon('vShade', 32)}</button>
        <hr />
        <button class="big" aria-label="Selected only">{@render icon('vSel', 32)}</button>
        <button class="big" aria-label="Document preview">{@render icon('vClip', 32)}</button>
        <button class="big" aria-label="Preview settings">{@render icon('vHalf', 34)}</button>
        <hr />
        <button aria-label="Mesh quality">{@render icon('vHex', 30)}</button>
        <i class="caret"></i>
      </div>

      <div class="canvas">
        <svg width="100%" height="100%">
          <defs>
            <linearGradient id="shell" x2="0" y2="1"><stop offset="0" stop-color="#f6f6f6" /><stop offset="0.3" stop-color="#e4e4e4" /><stop offset="1" stop-color="#bdbdbf" /></linearGradient>
            <linearGradient id="shell-off" x2="0" y2="1"><stop offset="0" stop-color="#c9c9d3" /><stop offset="0.4" stop-color="#a9a9b5" /><stop offset="1" stop-color="#8d8d99" /></linearGradient>
            <radialGradient id="dial"><stop offset="0" stop-color="#ececec" /><stop offset="1" stop-color="#a8a8a8" /></radialGradient>
          </defs>
          <g transform="translate(-1128 -344)">
            <rect x="1128" y="344" width="100%" height="11" fill="#96938c" />
            <path d="M1128 355H9000" stroke="#33312c" stroke-width="2" />
            <g stroke="#c2beb5" stroke-width="2">
              {#each gridX as x}<path d="M{x} 356V1499" />{/each}
              {#each gridY as y}<path d="M1128 {y}H9000" />{/each}
            </g>
            <rect x="2084" y="555" width="300" height="281" fill="#a999dc" stroke="#8274b4" />
            <path d="M1822 925H1896" stroke="#78b848" stroke-width="4" />
            {#each wires as w}{@render wire(w.d, w.list)}{/each}

            <g class="port"><circle cx="1133" cy="1229" r="6" /></g>
            <rect class="node" x="1100" y="1214" width="31" height="30" rx="4" />

            {#each components as c}
              <g class="port">
                {#each c.ins as [, y]}<circle cx={c.x} cy={y} r="6" />{/each}
                {#each c.outs as [, y]}<circle cx={c.x + c.w} cy={y} r="6" />{/each}
              </g>
              <rect class="node" class:hidden={c.hidden} x={c.x} y={c.y} width={c.w} height={c.h} rx="5" />
              {#each c.ins as [label, y]}<text class="label end" x={c.x + c.left} y={Number(y) + 3}>{label}</text>{/each}
              {#each c.outs as [label, y]}<text class="label" x={c.x + c.right} y={Number(y) + 3}>{label}</text>{/each}
            {/each}
            {@render itemIcon(1668, 1008)}
            {@render itemIcon(1514, 1182)}
            <g stroke="#111" stroke-width="2">
              <path d="m1464 1361-9-12m9 12 3-13m-3 13-9 9m9-9 9 10" />
              <path stroke="#b03040" d="m1464 1361 11-5" />
              <g stroke="none" fill="#111"><circle cx="1454" cy="1348" r="4" /><circle cx="1467" cy="1347" r="4" /><circle cx="1455" cy="1371" r="4" /><circle cx="1473" cy="1371" r="5" /><circle cx="1475" cy="1356" r="4" fill="#b03040" /></g>
            </g>
            <circle cx="1252" cy="1278" r="12" fill="none" stroke="#555" stroke-width="4" stroke-dasharray="4 3" />
            <path d="M1248 1274a6 6 0 1 0 8 0" fill="none" stroke="#c8202a" stroke-width="4" />
            <path d="M2140 735h6v20h-6zM2150 735h6v20h-6zM2137 757h24v4h-24z" fill="#4cae1c" /><path fill="#d8281a" stroke="#6a1008" d="M2147 732h5v13h5l-8 12-7-12h5z" />

            {#each relays as r}
              <g class="port"><circle cx={r.x} cy={r.y + 13} r="6" /><circle cx={r.x + r.w} cy={r.y + 13} r="6" /></g>
              <rect class="node" class:hidden={r.hidden} x={r.x} y={r.y} width={r.w} height="27" rx="5" />
              <text class="label small middle" x={r.x + r.w / 2} y={r.y + 18}>{r.label}</text>
            {/each}

            {#each panels as p}
              <g class="port"><circle cx={p.x} cy={p.y + 24} r="6" /><circle cx={p.x + p.w} cy={p.y + 24} r="6" /></g>
              <rect x={p.x} y={p.y} width={p.w} height="49" rx="5" fill={p.body} />
              <rect x={p.x} y={p.y} width={p.w} height="22" rx="4" fill={p.head} />
              <path d="M{p.x} {p.y + 22}h{p.w}" stroke="#333" stroke-width="2" />
              <rect x={p.x} y={p.y} width={p.w} height="49" rx="5" fill="none" stroke="#333" stroke-width="2" />
              <text class="label small middle" x={p.x + p.w / 2} y={p.y + 16}>{p.title}</text>
              <text class="label small middle" x={p.x + p.w / 2 - 5} y={p.y + 39}>{p.value}</text>
            {/each}

            <!-- pointer -->
            <circle cx="1785" cy="1033" r="41" fill="#e0da6c" />
            <path d="m1796 1015 10 13h-4v10h-12v-10h-4z" fill="#ff7a10" stroke="#c85a00" />
            <path d="M1778 1020v25l5-5 5 10 4-2-4-10h6z" fill="#fff" stroke="#222" stroke-width="2" />

            <!-- compass -->
            <path d="M2143 1455a33 33 0 0 1 64 0" fill="none" stroke="#000" stroke-width="7" />
            <path d="m2132 1431 12-1v5l6 4-9 3z" fill="#000" stroke="#000" stroke-width="2" />
            <circle cx="2175" cy="1455" r="30" fill="url(#dial)" stroke="#333" stroke-width="2" />
            <circle cx="2175" cy="1455" r="28" fill="none" stroke="#fff" stroke-width="3" />
            <path d="m2148 1444 2-7 7 7zM2183 1427l8 3-7 6zM2193 1466l7 1-3 7zM2159 1478l7 0-1 6z" fill="#fff" />

            <!-- freehand notes -->
            <path class="pen" d="M1171 1204C1175 1196 1185 1197 1213 1199C1240 1208 1262 1215 1286 1221C1312 1229 1336 1238 1357 1251C1370 1260 1376 1266 1379 1273C1386 1285 1384 1292 1384 1305C1384 1323 1372 1329 1361 1332C1335 1336 1305 1335 1278 1333C1240 1331 1200 1326 1171 1318C1155 1311 1155 1306 1156 1296C1157 1275 1156 1262 1160 1244C1164 1230 1184 1210 1213 1205" />
            <text class="note" x="1207" y="1177">点排序</text>
            <text class="note wide" x="1609" y="1335">距离路径最近的点和截面</text>
          </g>
        </svg>
        <div class="widgets">
          {#each widgets as widget}
            <svg class="icon" width="34" height="34" viewBox="0 0 24 24">{@html widget}</svg>
          {/each}
        </div>
        <div class="recent">
          <button class="hot" aria-label="Scribble"><svg width="28" height="28"><path d="m3 24 4-9 2 8 6-12 0 12 9-17-3 17" fill="none" stroke="#a85a00" stroke-width="3" stroke-linejoin="round" /></svg></button>
          <button class="toggle" aria-label="Toggle"><svg width="20" height="28"><path fill="#222" d="M2 1h16v26H2z" /><path fill="#ccc" d="M4 3h12v11H4z" /></svg></button>
          <button aria-label="List item"><svg width="36" height="34"><g transform="translate(18 17)">{@render itemIcon(0, 0)}</g></svg></button>
          <button class="neg">-x</button>
          <button aria-label="List length"><svg width="36" height="34"><path fill="#d8281a" d="M1 12h9v9H1z" /><path fill="#6fd01c" stroke="#276008" stroke-width="2" d="M10 2h9v30h-9z" /><path fill="#fff" stroke="#333" d="M21 9h11v16H21z" /><text x="24" y="22" font-size="14" font-family="Liberation Serif" fill="#111">i</text></svg></button>
        </div>
      </div>

      <footer class="gh-status">
        <svg width="24" height="24"><circle cx="12" cy="12" r="11" fill="#1a5bb8" stroke="#0a2f6a" stroke-width="2" /><path d="M12 5v8M12 16v3" stroke="#fff" stroke-width="4" /></svg>
        <span>Autosave complete (56 seconds ago)</span>
        <span class="version">1.0.0007</span>
        <svg width="16" height="16" fill="#888"><path d="M12 0h3v3h-3zM6 6h3v3H6zM12 6h3v3h-3zM0 12h3v3H0zM6 12h3v3H6zM12 12h3v3h-3z" /></svg>
      </footer>
    </section>

    <div class="watermark"><span>老T的前行</span><strong>bilibili</strong></div>
    <button class="tv" aria-label="播放">
      <svg width="80" height="80" viewBox="0 0 80 80"><path d="m22 6 9 11M58 6l-9 11" stroke="#fff" stroke-width="7" stroke-linecap="round" /><rect x="4" y="14" width="72" height="60" rx="15" fill="#fff" /><path d="M31 32q0-4 4-2l17 11q4 3 0 6L35 58q-4 2-4-2z" fill="#f2f2f2" stroke="#aaa" stroke-width="1" /></svg>
    </button>
  </div>
</div>

<style>
  :global(body) {
    margin: 0;
    background: #000;
  }

  .screen {
    box-sizing: border-box;
    min-height: 100vh;
    padding: 41px 0 39px;
    background: #000;
    display: flex;
    font-family: 'Open Sans', 'Noto Sans CJK SC', sans-serif;
    font-size: 18px;
    line-height: 28px;
    color: #2b2b2b;
  }

  .screen :global(*) {
    box-sizing: border-box;
  }

  button {
    border: 0;
    padding: 0;
    background: none;
    font: inherit;
    color: inherit;
    display: flex;
    align-items: center;
    justify-content: center;
    flex: none;
    white-space: nowrap;
  }

  h1,
  h2,
  h3,
  p {
    margin: 0;
    font-size: inherit;
    font-weight: normal;
  }

  .icon {
    display: block;
    fill: none;
    stroke: #222;
    stroke-width: 1.5px;
    overflow: visible;
  }

  .rhino {
    flex: 1;
    min-width: 0;
    position: relative;
    overflow: hidden;
    display: flex;
    flex-direction: column;
    background: #e9ebf0;
  }

  /* title and menu */
  .title {
    height: 31px;
    padding-bottom: 4px;
    display: flex;
    align-items: center;
    gap: 9px;
    background: #f1f1f1;
  }

  .title svg {
    flex: none;
  }

  .controls {
    margin-left: auto;
    display: flex;
  }

  .controls button {
    width: 70px;
  }

  .controls svg {
    fill: none;
    stroke: #222;
    stroke-width: 2px;
  }

  .menu {
    height: 28px;
    padding-left: 9px;
    display: flex;
    gap: 24px;
    background: #fff;
  }

  .menu u {
    text-underline-offset: 2px;
  }

  /* command area */
  .command {
    border-top: 7px solid #ececec;
    background: #fff;
  }

  .history {
    height: 109px;
    display: flex;
    border-bottom: 1px solid #b4b4b4;
  }

  .lines {
    flex: 1;
    padding: 4px 0 0 3px;
    border-left: 8px solid #ececec;
    font-size: 19px;
    line-height: 35px;
    white-space: nowrap;
  }

  .vscroll {
    width: 25px;
    background: #f2f2f2;
    padding: 56px 11px 0;
  }

  .vscroll span {
    display: block;
    width: 3px;
    height: 26px;
    background: #888;
  }

  .prompt {
    height: 32px;
    padding-left: 11px;
    display: flex;
    align-items: center;
    font-weight: bold;
    border-bottom: 2px solid #dcdde2;
  }

  .prompt input {
    flex: 1;
    border: 0;
    outline: 0;
    font: inherit;
  }

  .spin {
    width: 23px;
    margin-right: 2px;
  }

  .spin button {
    width: 22px;
    height: 14px;
    background: #f2f2f2;
    border: 1px solid #aaa;
  }

  .work {
    flex: 1;
    display: flex;
    min-height: 0;
  }

  main {
    flex: 1;
    min-width: 0;
    display: flex;
    flex-direction: column;
  }

  .tabs {
    height: 56px;
    padding: 12px 0 0 8px;
    display: flex;
    font-size: 20px;
    border-bottom: 1px solid #d0d6e2;
  }

  .tabs button {
    height: 44px;
    padding: 0 29px;
    color: #444;
  }

  .tabs .active {
    background: #eff0f4;
    border: 1px solid #ccd1dc;
    border-bottom: 0;
    border-radius: 8px 8px 0 0;
    padding: 0 28px;
  }

  .toolbar {
    width: 1110px;
    height: 59px;
    margin-left: 9px;
    padding-bottom: 11px;
    display: grid;
    grid-template-columns: repeat(26, 1fr);
    align-items: center;
  }

  .toolbar button {
    height: 44px;
  }

  .flyout {
    position: relative;
  }

  .flyout::after {
    content: '';
    position: absolute;
    right: 1px;
    bottom: 0;
    border: 4px solid transparent;
    border-right-color: #666;
    border-bottom-color: #666;
  }

  .body {
    flex: 1;
    display: flex;
    min-height: 0;
  }

  .side {
    width: 96px;
    flex: none;
    padding: 4px 10px 0 1px;
    margin-top: 4px;
    border-top: 2px solid #d6d8de;
    display: grid;
    grid-template-columns: 42px 42px;
    grid-auto-rows: 43px;
    align-content: start;
  }

  .views {
    flex: 1;
    min-width: 0;
    display: flex;
    flex-direction: column;
  }

  .viewport {
    flex: 1;
    min-height: 0;
    position: relative;
    background: #9ba1a8;
    overflow: hidden;
  }

  .view-name {
    position: absolute;
    left: 0;
    top: 0;
    height: 32px;
    padding: 0 4px 0 11px;
    gap: 4px;
    background: #7f9df2;
    font-size: 20px;
    font-weight: bold;
    color: #223;
  }

  .view-name i {
    width: 2px;
    height: 24px;
    margin-left: 6px;
    background: #334;
  }

  .scene {
    display: block;
  }

  .mark {
    fill: none;
    stroke: #c11405;
    stroke-width: 4px;
  }

  .axes {
    fill: none;
    stroke: #666b72;
    stroke-width: 2px;
  }

  .axes text {
    fill: #666b72;
    stroke: none;
    font-size: 20px;
  }

  .view-tabs {
    height: 48px;
    display: flex;
    align-items: flex-start;
    gap: 26px;
    font-size: 20px;
  }

  .view-tabs button {
    height: 42px;
  }

  .view-tabs .active {
    height: 38px;
    padding: 4px 5px 0 16px;
    border: 1px solid #cbced6;
    border-top: 0;
    border-radius: 0 0 6px 14px;
    margin-right: -6px;
  }

  /* layer panel */
  .panel {
    width: 334px;
    flex: none;
    padding: 0 0 14px;
    display: flex;
    flex-direction: column;
    border-left: 2px solid #d4d6dc;
  }

  .sync {
    height: 109px;
    padding: 10px 0 0 10px;
    display: grid;
    grid-template-columns: 192px 1fr;
    grid-auto-rows: 42px;
    border-bottom: 1px solid #d4d6dc;
    font-size: 20px;
    color: #444;
  }

  .sync button {
    justify-content: flex-start;
    gap: 11px;
    grid-column: 1;
  }

  .sync .more {
    grid-column: 2;
    grid-row: 2;
    padding-left: 20px;
    font-size: 24px;
  }

  .panel h2 {
    height: 42px;
    padding: 8px 0 0 8px;
    display: flex;
    align-items: center;
    gap: 8px;
    font-size: 20px;
    color: #444;
  }

  .panel h2::after {
    content: '';
    flex: 1;
    height: 4px;
    border-top: 1px solid #ccd1dc;
    border-bottom: 1px solid #ccd1dc;
  }

  .panel-tabs {
    height: 43px;
    display: flex;
    padding-left: 1px;
    border-bottom: 1px solid #c6cad4;
    overflow: hidden;
  }

  .panel-tabs button {
    width: 49px;
    height: 44px;
  }

  .panel-tabs .active {
    border: 1px solid #c6cad4;
    border-bottom: 0;
    background: #eff0f4;
  }

  .panel-tabs .cog {
    padding-top: 12px;
  }

  .layer-tools {
    height: 58px;
    padding-left: 8px;
    display: flex;
    align-items: center;
    border-left: 1px solid #c6cad4;
    margin-left: 2px;
  }

  .layer-tools button {
    width: 35px;
    height: 28px;
  }

  .layers {
    flex: 1;
    margin: 0 5px 0 4px;
    border-top: 1px solid #b8bcc6;
    border-left: 1px solid #c6cad4;
    background: #fff;
  }

  table {
    width: 100%;
    table-layout: fixed;
    border-collapse: collapse;
    font-size: 20px;
    color: #333;
  }

  th,
  td {
    height: 32px;
    padding: 0;
    border-bottom: 1px solid #e6e6e6;
    font-weight: normal;
    text-align: center;
    white-space: nowrap;
  }

  th {
    height: 36px;
    width: 26px;
    border: 0;
    border-right: 1px solid #ddd;
  }

  th.now {
    width: 53px;
  }

  th.mat {
    width: 47px;
  }

  .name {
    width: 145px;
    padding-left: 13px;
    text-align: left;
  }

  th.name {
    padding-left: 7px;
  }

  td :global(svg),
  td span {
    display: block;
    margin: auto;
  }

  .current .name {
    font-weight: bold;
  }

  .selected {
    background: #7f9df2;
    outline: 1px dotted #335;
  }

  .swatch {
    width: 18px;
    height: 18px;
    border: 1px solid #222;
  }

  .selected .swatch {
    border-color: #fff;
  }

  .material {
    width: 26px;
    height: 26px;
    margin-left: 4px;
    border-radius: 50%;
    background: #fdfdfd;
  }

  .hscroll {
    height: 25px;
    margin-left: 4px;
    padding: 10px 26px;
    background: #efefef;
    border-bottom: 1px solid #b8bcc6;
  }

  .hscroll span {
    display: block;
    width: 148px;
    height: 3px;
    background: #777;
  }

  /* object snaps and status */
  .osnap {
    height: 41px;
    padding: 0 0 3px 12px;
    display: flex;
    align-items: center;
    gap: 13px;
    font-size: 19px;
    border-bottom: 1px solid #c2c5cc;
  }

  .osnap label {
    display: flex;
    align-items: center;
    gap: 4px;
    white-space: nowrap;
  }

  .osnap input {
    appearance: none;
    width: 20px;
    height: 20px;
    margin: 0;
    flex: none;
    border: 2px solid #888;
    border-radius: 4px;
    background: #f6f6f8;
  }

  .osnap input:checked {
    border: 0;
    background: #0660b4;
  }

  .osnap input:checked::after {
    content: '';
    display: block;
    width: 6px;
    height: 10px;
    margin: 3px 0 0 7px;
    border: solid #fff;
    border-width: 0 2px 2px 0;
    transform: rotate(40deg);
  }

  .osnap .round {
    gap: 8px;
  }

  .round + .round {
    margin-left: 20px;
  }

  .osnap .round input {
    width: 16px;
    height: 16px;
    border: 0;
    border-radius: 50%;
    background: #fff;
  }

  .status {
    height: 22px;
    display: flex;
    align-items: flex-start;
    overflow: hidden;
    font-size: 19px;
    line-height: 34px;
    color: #444;
    white-space: nowrap;
  }

  .status > * {
    height: 34px;
    flex: none;
    border-right: 1px solid #c2c5cc;
    text-align: center;
  }

  .plane {
    width: 92px;
  }

  .coord {
    width: 134px;
  }

  .active-layer {
    width: 256px;
    display: flex;
    gap: 4px;
  }

  .active-layer i {
    width: 22px;
    height: 24px;
    margin: 3px 0 0 4px;
    background: #ee2400;
    border: 1px solid #700;
  }

  .status button {
    padding: 0 9px;
  }

  .status .on {
    background: #cdd2ec;
    font-weight: bold;
  }

  .status .saved {
    padding-left: 2px;
    border: 0;
  }

  /* Grasshopper window floats above Rhino */
  .gh {
    position: absolute;
    left: 1125px;
    right: 338px;
    top: 0;
    bottom: 24px;
    display: flex;
    flex-direction: column;
    padding: 0 1px 0 2px;
    overflow: hidden;
    background: #f0f0f0;
    border: solid #9a9a9a;
    border-width: 0 1px 1px;
    border-radius: 10px;
    box-shadow: 0 4px 22px rgba(0, 0, 0, 0.4);
    color: #111;
  }

  .gh-title {
    height: 43px;
    padding: 0 0 2px 10px;
    display: flex;
    align-items: center;
    background: #f3f3f4;
    color: #8a8a8a;
  }

  .gh-title .controls {
    gap: 6px;
  }

  .gh-title button {
    width: 64px;
  }

  .gh-title svg {
    stroke: #888;
  }

  .gh-menu {
    height: 44px;
    padding: 0 16px;
    display: flex;
    gap: 32px;
  }

  .file {
    margin-left: auto;
  }

  .gh-tabs {
    height: 36px;
    flex: none;
    display: flex;
    align-items: flex-end;
    font: 16px 'Liberation Mono', monospace;
    color: #666;
    border-bottom: 1px solid #aaa;
  }

  .gh-tabs button {
    min-width: 43px;
    height: 34px;
    padding: 0 12px;
  }

  .gh-tabs .active {
    background: #fff;
    color: #000;
    font-weight: bold;
    border: 1px solid #999;
    border-bottom: 0;
    border-radius: 9px 9px 0 0;
    padding: 0 11px 5px;
  }

  .ribbon {
    height: 131px;
    padding: 3px 2px 17px;
    display: flex;
    gap: 7px;
    background: linear-gradient(#dcdcdc, #f2f2f2);
    border-bottom: 2px solid #777;
  }

  .ribbon section {
    border: 1px solid #888;
    border-radius: 8px;
    overflow: hidden;
    background: linear-gradient(#e2e2e2, #d3d3d3 60%, #e6e6e6);
  }

  .blocks {
    height: 88px;
    padding: 3px 3px 0;
    display: flex;
  }

  .block {
    display: grid;
    grid-auto-rows: 42px;
  }

  .block + .block {
    margin-left: 8px;
    padding-left: 7px;
    border-left: 1px solid #aaa;
    height: 78px;
  }

  .block :global(svg) {
    filter: drop-shadow(1px 2px 2px rgba(0, 0, 0, 0.35));
  }

  h3 {
    height: 22px;
    padding: 0 4px 0 8px;
    display: grid;
    grid-template-columns: 1fr 14px;
    align-items: center;
    background: linear-gradient(#2e2e2e, #111);
    color: #fff;
    font: 13px 'Liberation Mono', monospace;
    text-align: center;
  }

  .gh-bar {
    height: 49px;
    padding: 0 3px 0 4px;
    display: flex;
    align-items: center;
    gap: 10px;
    background: linear-gradient(#fff, #f4f4f4);
  }

  .gh-bar hr {
    width: 1px;
    height: 32px;
    margin: 0;
    border: 0;
    background: #bbb;
  }

  .gh-bar select {
    appearance: none;
    width: 206px;
    height: 38px;
    padding: 0 4px;
    border: 2px solid #888;
    border-radius: 3px;
    font: inherit;
    font-size: 19px;
    color: #222;
    background: url('data:image/svg+xml,<svg xmlns="http://www.w3.org/2000/svg" width="14" height="9"><path d="M1 1l6 7 6-7" fill="none" stroke="%23777" stroke-width="2"/></svg>') no-repeat right 6px center #fff;
  }

  .caret {
    border: solid transparent;
    border-width: 6px 4px 0;
    border-top-color: #111;
  }

  .fill {
    flex: 1;
  }

  .gh-bar .big {
    width: 43px;
    height: 43px;
    margin-right: -10px;
  }

  .gh-bar .on {
    border: 2px solid #2f8fb4;
    background: #f4fafc;
  }

  .gh-bar .big + hr {
    margin-left: 4px;
  }

  .gh-bar .on + hr {
    margin-left: 12px;
  }

  .canvas {
    flex: 1;
    min-height: 0;
    position: relative;
    background: #d4d0c8;
    overflow: hidden;
  }

  .canvas > svg {
    display: block;
  }

  .wire {
    fill: none;
    stroke: #0a0a0a;
    stroke-width: 4px;
  }

  .wire.list {
    stroke-width: 7px;
  }

  .wire-core {
    fill: none;
    stroke: #85826f;
    stroke-width: 2px;
  }

  .port circle {
    fill: #fff;
    stroke: #111;
    stroke-width: 3px;
  }

  .node {
    fill: url(#shell);
    stroke: #333;
    stroke-width: 2px;
  }

  .node.hidden {
    fill: url(#shell-off);
  }

  .label {
    font-size: 15px;
    fill: #1a1a1a;
  }

  .small {
    font-size: 14px;
  }

  .end {
    text-anchor: end;
  }

  .middle {
    text-anchor: middle;
  }

  .letter {
    font-size: 13px;
    font-weight: bold;
    fill: #222;
  }

  .pen {
    fill: none;
    stroke: #ff1400;
    stroke-width: 8px;
    stroke-linecap: round;
  }

  .note {
    font-size: 49px;
    fill: #ff1400;
    stroke: #fff;
    stroke-width: 4px;
    paint-order: stroke;
  }

  .wide {
    font-size: 51px;
  }

  .widgets {
    position: absolute;
    left: 4px;
    top: 285px;
    display: grid;
    gap: 12px;
  }

  .recent {
    position: absolute;
    left: 0;
    bottom: 0;
    width: 224px;
    height: 43px;
    padding: 0 3px;
    display: flex;
    align-items: center;
    gap: 6px;
    background: linear-gradient(90deg, #ddd, #aaa);
    border: 2px solid #222;
    border-left: 0;
  }

  .recent button {
    width: 36px;
    height: 36px;
  }

  .recent .hot {
    background: #fbbf2c;
    border: 2px solid #333;
    border-radius: 5px;
  }

  .recent .toggle {
    background: #bbb;
    border: 2px solid #333;
    border-radius: 5px;
  }

  .recent .neg {
    width: 28px;
    height: 28px;
    margin: 0 4px;
    background: #f4f4f4;
    border: 1px solid #444;
    border-radius: 4px;
    font: italic bold 20px 'Liberation Serif', serif;
  }

  .gh-status {
    height: 36px;
    padding: 0 4px;
    display: flex;
    align-items: center;
    gap: 5px;
    background: #f4f4f4;
    border-top: 2px solid #fff;
    font-size: 19px;
    color: #333;
  }

  .version {
    margin-left: auto;
    margin-right: 26px;
    font-size: 18px;
    color: #777;
  }

  /* video overlay */
  .watermark {
    position: absolute;
    right: 48px;
    top: 47px;
    height: 100px;
    display: flex;
    align-items: center;
    gap: 26px;
    font-size: 51px;
    font-weight: bold;
    color: #fff;
    pointer-events: none;
  }

  .watermark span {
    opacity: 0.85;
  }

  .watermark strong {
    font-family: Lato, sans-serif;
    font-size: 74px;
    font-weight: bold;
    line-height: 88px;
    align-self: flex-start;
    color: #ebebec;
  }

  .tv {
    position: absolute;
    right: 48px;
    bottom: 107px;
    filter: drop-shadow(0 1px 4px rgba(0, 0, 0, 0.35));
  }
</style>
